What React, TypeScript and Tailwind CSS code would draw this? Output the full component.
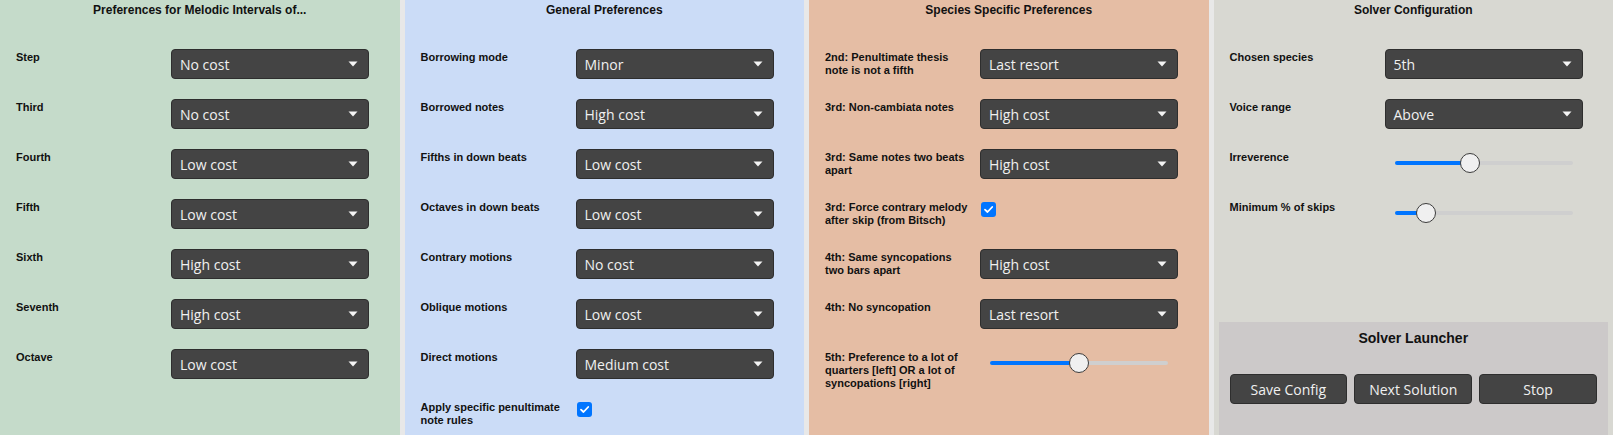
import React from "react";

type Row =
  | { kind: "select"; label: string; value: string }
  | { kind: "check"; label: string }
  | { kind: "slider"; label: string; pct: number };

const Arrow = () => (
  <svg width="10" height="6" viewBox="0 0 10 6" className="shrink-0">
    <path d="M0.5 0.5 L9.5 0.5 L5 5.5 Z" fill="#f4f4f4" />
  </svg>
);

const Select = ({ value }: { value: string }) => (
  <div className="flex h-[30px] w-[198px] items-center justify-between rounded-[4px] border border-[#2e2e2e] bg-[#444444] pl-[8px] pr-[10px] font-['Open_Sans',sans-serif] text-[14px] text-[#f0f0f0]">
    <span className="pt-[1px] leading-[18px]">{value}</span>
    <Arrow />
  </div>
);

const Check = () => (
  <div className="ml-[1px] mt-[3px] flex h-[15px] w-[15px] items-center justify-center rounded-[3px] bg-[#0075ff]">
    <svg width="11" height="11" viewBox="0 0 11 11">
      <path d="M2 5.6 L4.5 8 L9.2 3" fill="none" stroke="#ffffff" strokeWidth="1.8" strokeLinecap="round" strokeLinejoin="round" />
    </svg>
  </div>
);

const Slider = ({ pct }: { pct: number }) => (
  <div className="mx-[10px] flex h-[28px] w-[178px] items-center">
    <div className="relative h-[4px] w-full rounded-full bg-[#cfcfcf]">
      <div
        className="absolute left-0 top-0 h-[4px] rounded-full bg-[#0075ff]"
        style={{ width: `calc(10px + ${pct} * (100% - 20px))` }}
      />
      <div
        className="absolute top-[-8px] h-[20px] w-[20px] rounded-full border border-[#3c3c3c] bg-[#f0f0f0]"
        style={{ left: `calc(${pct} * (100% - 20px))` }}
      />
    </div>
  </div>
);

const Rows = ({ rows }: { rows: Row[] }) => (
  <div className="mt-[32px] grid grid-cols-[145px_198px] gap-x-[10px] gap-y-[20px] pl-[16px]">
    {rows.map((r, i) => (
      <React.Fragment key={i}>
        <div className="min-h-[30px] pt-[2px] text-[11px] font-bold leading-[13px] text-[#111111]">{r.label}</div>
        <div>
          {r.kind === "select" && <Select value={r.value} />}
          {r.kind === "check" && <Check />}
          {r.kind === "slider" && <Slider pct={r.pct} />}
        </div>
      </React.Fragment>
    ))}
  </div>
);

const Heading = ({ children }: { children: React.ReactNode }) => (
  <h2 className="h-[14px] text-center text-[12px] font-bold leading-[14px] text-[#111111]">{children}</h2>
);

const melodic: Row[] = [
  { kind: "select", label: "Step", value: "No cost" },
  { kind: "select", label: "Third", value: "No cost" },
  { kind: "select", label: "Fourth", value: "Low cost" },
  { kind: "select", label: "Fifth", value: "Low cost" },
  { kind: "select", label: "Sixth", value: "High cost" },
  { kind: "select", label: "Seventh", value: "High cost" },
  { kind: "select", label: "Octave", value: "Low cost" },
];

const general: Row[] = [
  { kind: "select", label: "Borrowing mode", value: "Minor" },
  { kind: "select", label: "Borrowed notes", value: "High cost" },
  { kind: "select", label: "Fifths in down beats", value: "Low cost" },
  { kind: "select", label: "Octaves in down beats", value: "Low cost" },
  { kind: "select", label: "Contrary motions", value: "No cost" },
  { kind: "select", label: "Oblique motions", value: "Low cost" },
  { kind: "select", label: "Direct motions", value: "Medium cost" },
  { kind: "check", label: "Apply specific penultimate note rules" },
];

const species: Row[] = [
  { kind: "select", label: "2nd: Penultimate thesis note is not a fifth", value: "Last resort" },
  { kind: "select", label: "3rd: Non-cambiata notes", value: "High cost" },
  { kind: "select", label: "3rd: Same notes two beats apart", value: "High cost" },
  { kind: "check", label: "3rd: Force contrary melody after skip (from Bitsch)" },
  { kind: "select", label: "4th: Same syncopations two bars apart", value: "High cost" },
  { kind: "select", label: "4th: No syncopation", value: "Last resort" },
  { kind: "slider", label: "5th: Preference to a lot of quarters [left] OR a lot of syncopations [right]", pct: 0.5 },
];

const solver: Row[] = [
  { kind: "select", label: "Chosen species", value: "5th" },
  { kind: "select", label: "Voice range", value: "Above" },
  { kind: "slider", label: "Irreverence", pct: 0.416 },
  { kind: "slider", label: "Minimum % of skips", pct: 0.133 },
];

const Button = ({ children }: { children: React.ReactNode }) => (
  <button className="h-[30px] flex-1 rounded-[4px] border border-[#2e2e2e] bg-[#444444] font-['Open_Sans',sans-serif] text-[14px] text-[#f0f0f0]">
    {children}
  </button>
);

export default function App() {
  return (
    <div className="flex h-[435px] w-[1613px] gap-[5px] overflow-hidden bg-[#e8e8e8] font-['Liberation_Sans',Arial,sans-serif]">
      <section className="flex-1 bg-[#c5dbca] pt-[3px]">
        <Heading>Preferences for Melodic Intervals of...</Heading>
        <Rows rows={melodic} />
      </section>
      <section className="flex-1 bg-[#cbdcf7] pt-[3px]">
        <Heading>General Preferences</Heading>
        <Rows rows={general} />
      </section>
      <section className="flex-1 bg-[#e5bda4] pt-[3px]">
        <Heading>Species Specific Preferences</Heading>
        <Rows rows={species} />
      </section>
      <section className="flex flex-1 flex-col bg-[#d8d8d2] pt-[3px]">
        <div className="flex-1">
          <Heading>Solver Configuration</Heading>
          <Rows rows={solver} />
        </div>
        <div className="mx-[5px] h-[113px] bg-[#ccc9c9] pt-[8px]">
          <h2 className="text-center text-[14px] font-bold leading-[16px] text-[#111111]">Solver Launcher</h2>
          <div className="mt-[28px] flex gap-[7px] px-[11px]">
            <Button>Save Config</Button>
            <Button>Next Solution</Button>
            <Button>Stop</Button>
          </div>
        </div>
      </section>
    </div>
  );
}
